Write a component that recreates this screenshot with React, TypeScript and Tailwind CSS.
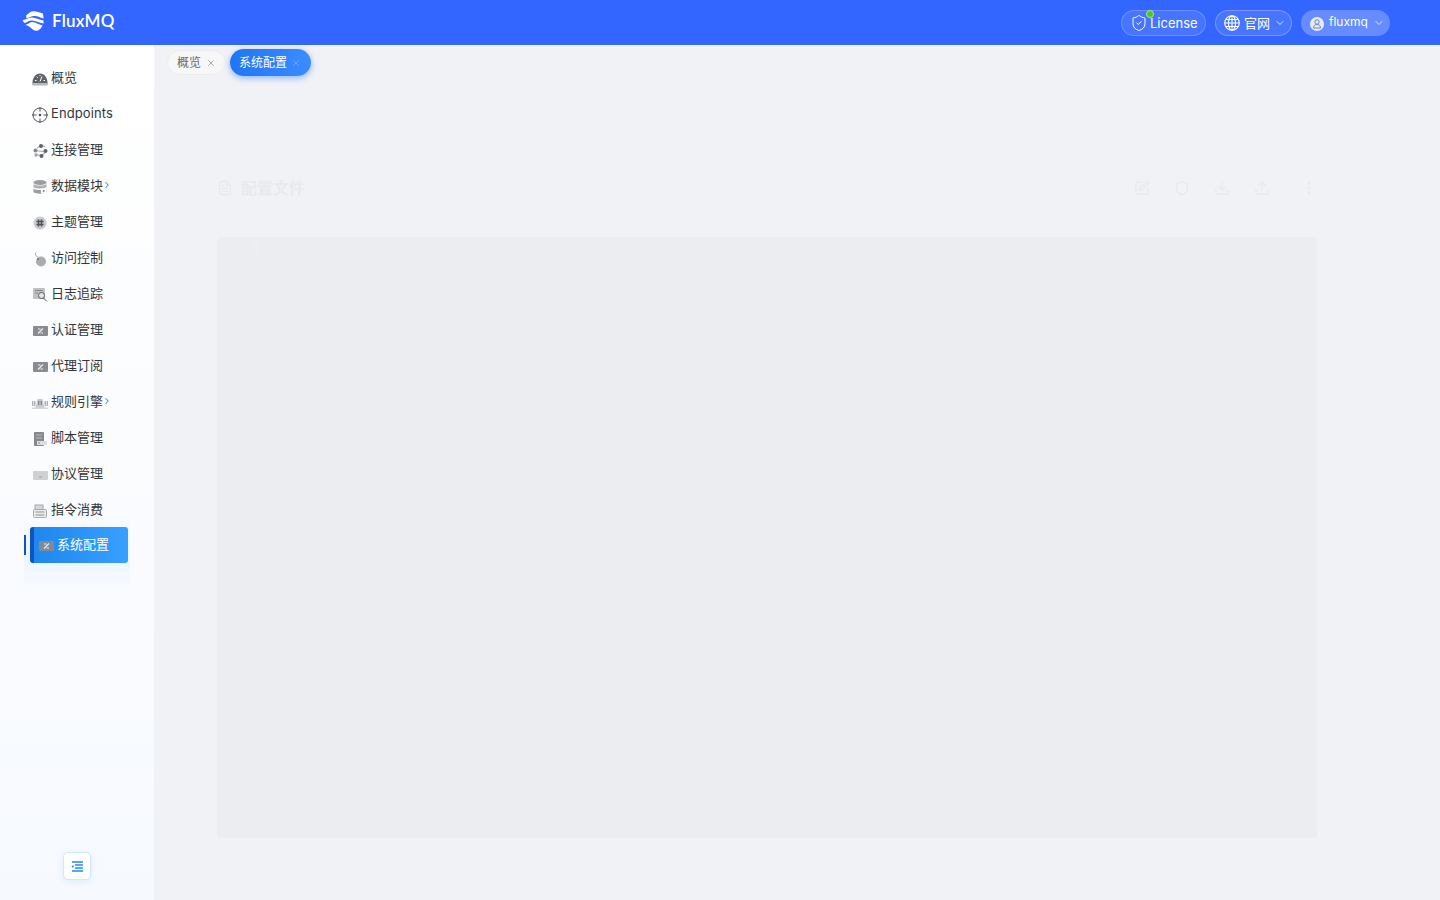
import { ChevronDown, ChevronRight, ShieldCheck, X, FileText, SquarePen, Shield, Download, Upload, MoreVertical } from "lucide-react";
import type { ReactNode } from "react";

const fontClass = "font-['Inter','Noto_Sans_CJK_SC',sans-serif]";

// small grey menu glyphs, drawn to match the reference
const Gauge = () => (
  <svg width="16" height="14" viewBox="0 0 16 14">
    <path d="M.5 12.500C0 6 3.500 1.500 8 1.500s8 4.500 7.500 11z" fill="#5f6368" />
    <path d="M8 9.500l2-5M3 8.500h1.500M11.500 8.500H13M4.800 4.800l1 1M8 3v1.200" stroke="#fff" strokeWidth="1" />
    <rect x=".5" y="11" width="15" height="2.500" fill="#b5b8bc" />
  </svg>
);
const Target = () => (
  <svg width="16" height="16" viewBox="0 0 16 16" fill="none" stroke="#4e5257" strokeWidth="1">
    <circle cx="8" cy="8" r="7" />
    <path d="M8 0v4.500M8 11.500V16M0 8h4.500M11.500 8H16" />
    <circle cx="8" cy="8" r="1.300" fill="#4e5257" stroke="none" />
  </svg>
);
const Nodes = () => (
  <svg width="15" height="14" viewBox="0 0 15 14" fill="none">
    <path d="M4 4c2-2 6-3 8-1M3 10c3 2 6 2 9-1M3 6c3 2 6 1 9 2" stroke="#b0b3b7" strokeWidth="1.200" />
    <circle cx="8" cy="2" r="2" fill="#5f6368" />
    <circle cx="2.500" cy="6.500" r="2" fill="#85898e" />
    <circle cx="12.500" cy="7" r="2" fill="#5f6368" />
    <circle cx="3" cy="11" r="1.700" fill="#a5a8ac" />
    <circle cx="8.500" cy="12" r="2" fill="#5f6368" />
  </svg>
);
const Database = () => (
  <svg width="14" height="14" viewBox="0 0 14 14">
    <ellipse cx="7" cy="2.500" rx="6.500" ry="2.400" fill="#9b9ea3" />
    <path d="M.5 4c2 2 11 2 13 0v3c-2 2-11 2-13 0z" fill="#aeb1b5" />
    <path d="M.5 8.500c2 2 11 2 13 0V12c-2 2.200-11 2.200-13 0z" fill="#9b9ea3" />
    <rect x="8" y="8.500" width="5.500" height="5" fill="#fff" />
    <circle cx="10.700" cy="11" r="1" fill="#7f8388" />
  </svg>
);
const Hash = () => (
  <svg width="14" height="14" viewBox="0 0 14 14">
    <circle cx="7" cy="7" r="6.500" fill="#c8cacd" />
    <path d="M5.500 3.500v7M8.500 3.500v7M3.500 5.500h7M3.500 8.500h7" stroke="#4e5257" strokeWidth="1.500" />
  </svg>
);
const Mouse = () => (
  <svg width="14" height="15" viewBox="0 0 14 15">
    <ellipse cx="8" cy="9.500" rx="5" ry="5" fill="#a9acb0" />
    <path d="M3 .500C1.500 2.500 3 4 5 5" stroke="#9b9ea3" strokeWidth="1" fill="none" />
    <circle cx="5" cy="7" r="1" fill="#6f7479" />
  </svg>
);
const LogSearch = () => (
  <svg width="16" height="14" viewBox="0 0 16 14">
    <rect x="1" y="0" width="12" height="11" rx="1" fill="#bfc1c5" />
    <path d="M3 2.500h8M3 5h3" stroke="#85888d" strokeWidth="1" />
    <circle cx="9.500" cy="7.500" r="3" fill="#e5e6e8" stroke="#55595e" strokeWidth="1" />
    <path d="M11.500 10l3.500 3.500" stroke="#55595e" strokeWidth="1" />
  </svg>
);
const Card = ({ dark = "#888c91" }: { dark?: string }) => (
  <svg width="15" height="10" viewBox="0 0 15 10">
    <rect width="15" height="10" rx="1" fill={dark} />
    <path d="M5 7.500L10 2.500M7.500 7h2.500M5 3h2.500" stroke="#eceded" strokeWidth="1.200" />
  </svg>
);
const Robot = () => (
  <svg width="16" height="11" viewBox="0 0 16 11" fill="none">
    <path d="M3.500 10L5.500 1h5l2 9z" fill="#c5c8cc" />
    <path d="M.8 3v5M2.800 3v5M13.200 3v5M15.200 3v5" stroke="#8b8f94" strokeWidth="1" />
    <path d="M6.800 3v4M9.200 3v4" stroke="#6f7479" strokeWidth="1" />
    <rect y="9.500" width="16" height="1.500" fill="#d6d8da" />
  </svg>
);
const Script = () => (
  <svg width="14" height="14" viewBox="0 0 14 14">
    <rect x="1" y="0" width="10" height="14" rx="1" fill="#85898e" />
    <path d="M3 3h6M3 6h6" stroke="#b9bbbe" strokeWidth="1" />
    <rect x="4" y="9" width="10" height="4" fill="#dcdddf" />
    <path d="M5 11h2" stroke="#85898e" strokeWidth="1" />
  </svg>
);
const Protocol = () => (
  <svg width="15" height="9" viewBox="0 0 15 9">
    <rect width="15" height="9" rx="1" fill="#ced0d3" />
    <path d="M6 6h3" stroke="#999ca0" strokeWidth="1" />
  </svg>
);
const Ticket = () => (
  <svg width="14" height="14" viewBox="0 0 14 14" fill="none">
    <rect x="2" y="1" width="8" height="5" fill="#d4d6d8" stroke="#a5a8ac" strokeWidth="1" />
    <rect x=".5" y="5.500" width="13" height="8" rx="1" fill="#eceded" stroke="#a5a8ac" strokeWidth="1" />
    <path d="M2.500 8h9M2.500 11h9" stroke="#8b8f94" strokeWidth="1" />
  </svg>
);

const Logo = () => (
  <svg width="22" height="20" viewBox="0 0 22 20" fill="#fff">
    <path d="M4 4.500C6 3 8 .5 11 .2 14 0 17 1 21 2.500l.5 5c-4-1.500-7-3-10-2.500C8.500 5.500 6 7 4.500 7.500z" />
    <path d="M.5 9.500C4 8.500 6.500 6.500 10 6.500c3.500 0 7 2.500 11.500 3V12.500C17 12 13.500 9.500 10 9.500 7 9.500 4.500 11.500 2.500 12z" />
    <path d="M3.500 14C6 13 8 11 10.500 11c3 0 6 2.500 10 3.500-1 2-2.500 4-4.500 5-3 .8-5-.5-7-2.500-1.500-1.500-3-2.500-5.500-3z" />
  </svg>
);

const GlobeGrid = () => (
  <svg width="16" height="16" viewBox="0 0 16 16" fill="none" stroke="#fff" strokeWidth="1.100">
    <circle cx="8" cy="8" r="7.300" />
    <ellipse cx="8" cy="8" rx="3.500" ry="7.300" />
    <path d="M8 .7v14.600M.7 8h14.600M1.800 4.500h12.400M1.800 11.500h12.400" />
  </svg>
);

const Avatar = () => (
  <svg width="14" height="14" viewBox="0 0 14 14" className="mt-0.5">
    <circle cx="7" cy="7" r="7" fill="#eceae6" />
    <circle cx="7" cy="5" r="2.200" fill="none" stroke="#5f85e6" strokeWidth="1" />
    <path d="M3.500 11c0-2.500 1.500-3.500 3.500-3.500s3.500 1 3.500 3.500z" fill="none" stroke="#5f85e6" strokeWidth="1" />
  </svg>
);

type MenuItem = { label: string; icon: ReactNode; arrow?: boolean };

const menu: MenuItem[] = [
  { label: "概览", icon: <Gauge /> },
  { label: "Endpoints", icon: <Target /> },
  { label: "连接管理", icon: <Nodes /> },
  { label: "数据模块", icon: <Database />, arrow: true },
  { label: "主题管理", icon: <Hash /> },
  { label: "访问控制", icon: <Mouse /> },
  { label: "日志追踪", icon: <LogSearch /> },
  { label: "认证管理", icon: <Card /> },
  { label: "代理订阅", icon: <Card /> },
  { label: "规则引擎", icon: <Robot />, arrow: true },
  { label: "脚本管理", icon: <Script /> },
  { label: "协议管理", icon: <Protocol /> },
  { label: "指令消费", icon: <Ticket /> },
];

const Sidebar = () => (
  <aside className="w-[154px] shrink-0 h-[855px] flex flex-col bg-gradient-to-b from-white to-[#f6f9fe] pt-[15px]">
    {menu.map((item) => (
      <div key={item.label} className="h-9 pl-8 flex items-center text-[13px] leading-[18px] text-[#333639]">
        <span className="w-4 h-4 mt-0.5 shrink-0 mr-[3px] flex items-center justify-center">{item.icon}</span>
        <span className={item.label === "Endpoints" ? "-mt-0.5 tracking-[0.1px]" : "-mt-0.5"}>{item.label}</span>
        {item.arrow && <ChevronRight className="w-[10px] h-[10px] -mt-0.5 -ml-px text-[#2f8ff5]" strokeWidth={2.500} />}
      </div>
    ))}
    {/* active item with its glow */}
    <div className="relative -mt-px ml-6 w-[106px] h-[60px]">
      <div className="absolute left-0 -top-3 w-full h-[76px] bg-gradient-to-b from-transparent via-[#eaf4ff] to-transparent" />
      <div className="absolute left-0 top-2 w-0.5 h-5 bg-[#0a57c4]" />
      <div className="absolute left-1.5 top-0 w-[98px] h-9 rounded-[3px] border-l-[4px] border-[#0a57c4] bg-gradient-to-r from-[#1f87ee] to-[#37a0ff] flex items-center pl-1 text-[13px] text-white">
        <span className="w-4 h-4 mt-0.5 mr-[3px] flex items-center justify-center"><Card dark="#7f8a96" /></span>
        <span>系统配置</span>
      </div>
    </div>
    <div className="mt-auto mb-5 flex justify-center">
      <div className="w-7 h-7 rounded-[5px] bg-white border border-[#d2e6ff] shadow-[0_2px_6px_rgba(60,150,250,0.12)] flex items-center justify-center">
        <svg width="12" height="11" viewBox="0 0 12 11" stroke="#2088f5" strokeWidth="1.400">
          <path d="M1 1h11M4 4h8M4 7h8M1 10h11" />
          <path d="M2.500 3.800v3.400L.5 5.500z" fill="#2088f5" stroke="none" />
        </svg>
      </div>
    </div>
  </aside>
);

const Header = () => (
  <header className="h-[45px] bg-[#3366ff] flex items-center">
    <div className="ml-[22px] flex items-center gap-2 -mt-[4px]">
      <Logo />
      <span className="text-[17px] leading-5 font-semibold text-white tracking-[0.2px] font-['Lato',sans-serif]">FluxMQ</span>
    </div>
    <div className="ml-auto mr-[50px] flex items-center gap-[9px] text-[13px] text-white">
      <div className="relative h-[26px] w-[85px] rounded-full border border-white/20 bg-white/10 flex items-center pl-2 gap-[2px]">
        <ShieldCheck className="w-[18px] h-[18px]" strokeWidth={1.300} />
        <span className="absolute left-[24px] -top-[1px] w-2 h-2 rounded-full bg-[#52c41a] border border-[#a9e58d]" />
        <span className="mt-0.5">License</span>
      </div>
      <div className="h-[26px] w-[77px] rounded-full border border-white/25 bg-white/10 flex items-center pl-2 gap-1">
        <GlobeGrid />
        <span className="mt-0.5">官网</span>
        <ChevronDown className="w-3 h-3 opacity-80" />
      </div>
      <div className="h-[26px] w-[89px] rounded-full bg-white/25 flex items-center pl-[9px] gap-[5px] text-[12px]">
        <Avatar />
        <span className="-mt-0.5">fluxmq</span>
        <ChevronDown className="w-3 h-3 opacity-80" />
      </div>
    </div>
  </header>
);

const Tabs = () => (
  <div className="h-[35px] pl-[13px] flex items-center gap-1 text-[12px]">
    <div className="h-[25px] w-[59px] rounded-full border border-[#ebecee] bg-[#f7f7f8] flex items-center pl-[9px] gap-[5px] text-[#666a6e]">
      <span>概览</span>
      <X className="w-[10px] h-[10px] text-[#9a9da1]" />
    </div>
    <div className="h-[27px] w-[81px] rounded-full bg-gradient-to-r from-[#1f76f5] to-[#3a8cff] shadow-[0_2px_6px_rgba(40,120,250,0.5)] flex items-center pl-[9px] gap-[4px] text-white">
      <span>系统配置</span>
      <X className="w-[10px] h-[10px] text-[#7fa9e6]" />
    </div>
  </div>
);

// page content still fading in, hence the very low contrast
const Content = () => (
  <div className="pl-[63px] pr-[123px] pt-[96px]">
    <div className="h-[61px] flex items-start justify-between opacity-[0.03]">
      <div className="flex items-center gap-2 h-6 text-[16px] font-semibold text-black">
        <FileText className="w-4 h-4" />
        <span>配置文件</span>
      </div>
      <div className="flex items-center gap-6 text-black h-6">
        <SquarePen className="w-4 h-4" />
        <Shield className="w-4 h-4" />
        <Download className="w-4 h-4" />
        <Upload className="w-4 h-4" />
        <MoreVertical className="w-4 h-4 ml-[7px]" />
      </div>
    </div>
    <div className="h-[601px] rounded-[4px] bg-[#ecedf1] pl-9 pt-0.5 text-[12px] text-[#f1f2f5]">1</div>
  </div>
);

export default function App() {
  return (
    <div className={`${fontClass} w-full h-[900px] overflow-hidden bg-[#f0f2f6]`}>
      <Header />
      <div className="flex">
        <Sidebar />
        <main className="flex-1 min-w-0">
          <Tabs />
          <Content />
        </main>
      </div>
    </div>
  );
}
